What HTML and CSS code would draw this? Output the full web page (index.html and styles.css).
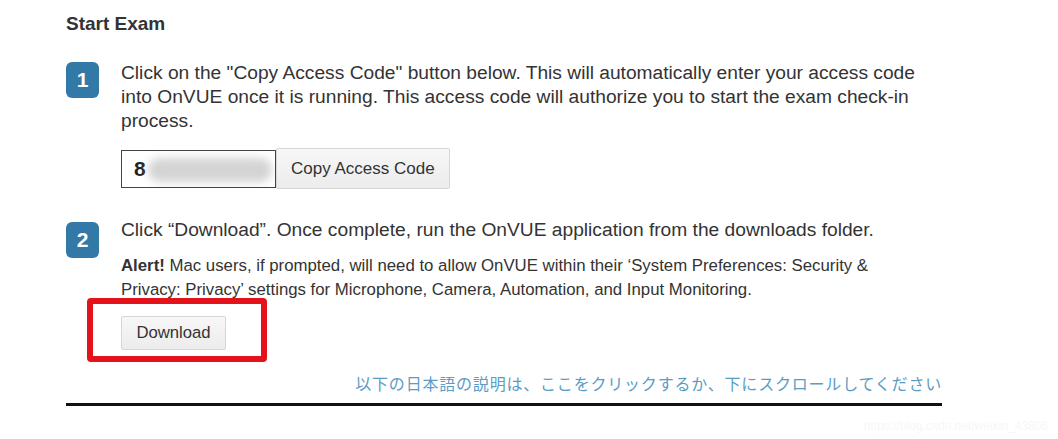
FILE: index.html
```html
<!DOCTYPE html>
<html lang="en">
<head>
  <meta charset="UTF-8">
  <meta name="viewport" content="width=device-width, initial-scale=1.0">
  <title>Start Exam</title>
  <link rel="stylesheet" href="styles.css">
</head>
<body>

  <div class="exam">
    <!-- Heading -->
    <h2 class="exam-title">Start Exam</h2>

    <!-- Step 1 -->
    <div class="step step-one">
      <div class="step-badge">1</div>
      <div class="step-body">
        <p class="step-text">Click on the "Copy Access Code" button below. This will automatically enter your access code into OnVUE once it is running. This access code will authorize you to start the exam check-in process.</p>
        <div class="code-row">
          <div class="code-input">8<span class="code-blur"></span></div>
          <button class="btn btn-copy">Copy Access Code</button>
        </div>
      </div>
    </div>

    <!-- Step 2 -->
    <div class="step step-two">
      <div class="step-badge">2</div>
      <div class="step-body">
        <p class="step-text">Click “Download”. Once complete, run the OnVUE application from the downloads folder.</p>
        <p class="alert-text"><strong>Alert!</strong> Mac users, if prompted, will need to allow OnVUE within their ‘System Preferences: Security &amp; Privacy: Privacy’ settings for Microphone, Camera, Automation, and Input Monitoring.</p>
        <div class="download-row">
          <button class="btn btn-download">Download</button>
          <span class="highlight-box"></span>
        </div>
      </div>
    </div>

    <!-- Japanese link -->
    <div class="jp-link-row">
      <a class="jp-link" href="#jp">以下の日本語の説明は、ここをクリックするか、下にスクロールしてください</a>
    </div>
    <hr class="divider">
  </div>

  <div class="watermark">https://blog.csdn.net/weixin_43806</div>

</body>
</html>
```

FILE: styles.css
```css
body {
  margin: 0;
  background-color: #fff;
  color: #333;
  font-family: "Liberation Sans", Arial, sans-serif;
  height: 439px;
  overflow: hidden;
  position: relative;
}
.exam {
  width: 876px;
  padding: 12px 0 0 66px;
}
.exam-title {
  margin: 0;
  font-size: 19px;
  line-height: 24px;
  font-weight: bold;
  color: #333;
}
.step {
  display: flex;
  gap: 22px;
}
.step-one {
  margin-top: 25px;
}
.step-two {
  margin-top: 29px;
}
.step-badge {
  flex: none;
  width: 33px;
  height: 36px;
  margin-top: 1px;
  border-radius: 6px;
  background-color: #3379a8;
  color: #fff;
  font-size: 21px;
  font-weight: bold;
  line-height: 36px;
  text-align: center;
}
.step-two .step-badge {
  margin-top: 4px;
}
.step-body {
  flex: 1;
  max-width: 800px;
}
.step-text {
  margin: 0;
  font-size: 19.2px;
  line-height: 24px;
  color: #333;
}
.alert-text {
  margin: 12px 0 0;
  font-size: 16.8px;
  line-height: 24px;
  color: #333;
}
.code-row {
  display: flex;
  align-items: center;
  margin-top: 15px;
}
.code-input {
  position: relative;
  width: 141px;
  height: 36px;
  padding-left: 12px;
  border: 1px solid #444;
  font-size: 21px;
  font-weight: bold;
  line-height: 36px;
  color: #222;
  overflow: hidden;
}
.code-blur {
  position: absolute;
  left: 26px;
  top: 7px;
  width: 124px;
  height: 24px;
  border-radius: 12px;
  background-color: #d4d4d4;
  filter: blur(4px);
}
.btn {
  font-family: "Liberation Sans", Arial, sans-serif;
  color: #333;
  background: linear-gradient(#f7f7f7, #ececec);
  border: 1px solid #d6d6d6;
  border-radius: 2px;
  cursor: pointer;
}
.btn-copy {
  height: 41px;
  padding: 0 14px;
  font-size: 17px;
}
.download-row {
  position: relative;
  margin-top: 14px;
}
.btn-download {
  height: 34px;
  width: 105px;
  font-size: 16.7px;
}
.highlight-box {
  position: absolute;
  left: -34px;
  top: -18px;
  width: 168px;
  height: 52px;
  border: 6px solid #e3121b;
  border-radius: 4px;
}
.jp-link-row {
  margin-top: 22px;
  text-align: right;
}
.jp-link {
  font-family: "Noto Sans CJK JP", sans-serif;
  font-size: 16px;
  letter-spacing: 0.8px;
  line-height: 22px;
  color: #5b9cc6;
  text-decoration: none;
}
.divider {
  margin: 9px 0 0;
  border: none;
  border-top: 3px solid #111;
}
.watermark {
  position: absolute;
  right: 10px;
  bottom: 6px;
  font-size: 12px;
  color: #f7f7f7;
}
```
